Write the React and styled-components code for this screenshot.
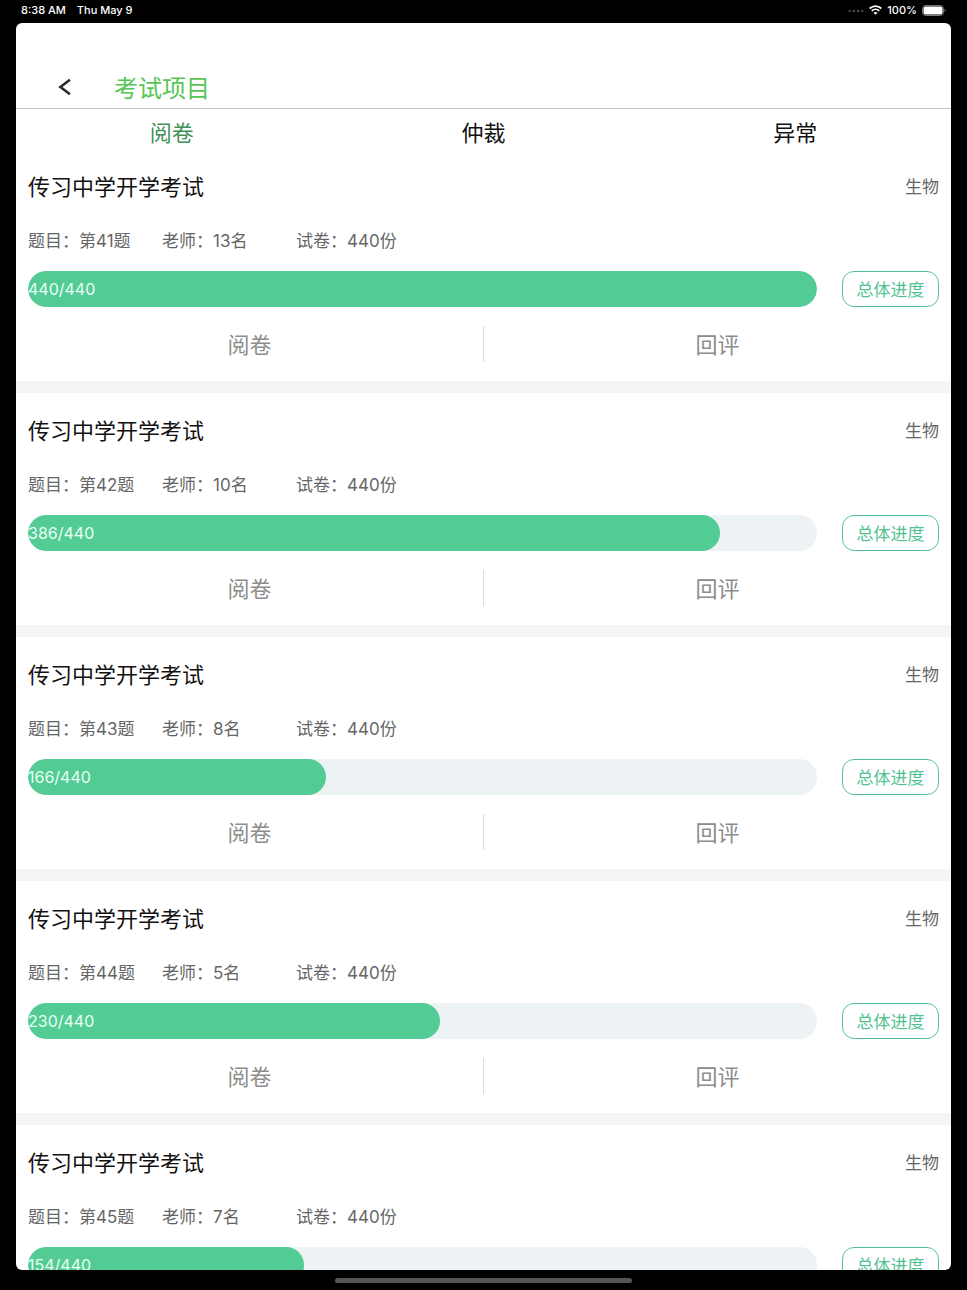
import React, { useState } from "react";
import styled, { createGlobalStyle } from "styled-components";

const exams = [
  { question: 41, teachers: 13, done: 440, total: 440 },
  { question: 42, teachers: 10, done: 386, total: 440 },
  { question: 43, teachers: 8, done: 166, total: 440 },
  { question: 44, teachers: 5, done: 230, total: 440 },
  { question: 45, teachers: 7, done: 154, total: 440 },
];

const tabs = ["阅卷", "仲裁", "异常"];

const StatusBar = () => (
  <StatusContainer>
    <StatusGroup $gap="11px">
      <span>8:38 AM</span>
      <span>Thu May 9</span>
    </StatusGroup>
    <StatusGroup $gap="5px">
      <svg width="16" height="4" viewBox="0 0 16 4" fill="#4a4a4a">
        <circle cx="1.7" cy="3" r="1.2" />
        <circle cx="5.9" cy="3" r="1.2" />
        <circle cx="10.1" cy="3" r="1.2" />
        <circle cx="14.3" cy="3" r="1.2" />
      </svg>
      <svg width="13" height="10" viewBox="0 0 13 10" fill="none" stroke="#fff">
        <path d="M0.7 3.5C4 0.3 9 0.3 12.3 3.5" strokeWidth="1.8" />
        <path d="M2.8 5.8C4.9 3.8 8.1 3.8 10.2 5.8" strokeWidth="1.8" />
        <path d="M6.5 9.8L4.5 7.7C5.6 6.7 7.4 6.7 8.5 7.7Z" fill="#fff" stroke="none" />
      </svg>
      <span>100%</span>
      <svg width="24" height="11" viewBox="0 0 24 11">
        <rect x="0.5" y="0.5" width="21" height="10" rx="3" fill="none" stroke="#777" />
        <rect x="1.5" y="1.5" width="19" height="8" rx="2" fill="#fff" />
        <path d="M22.6 3.8V7.2C24 6.6 24 4.4 22.6 3.8Z" fill="#777" />
      </svg>
    </StatusGroup>
  </StatusContainer>
);

const ExamCard = ({ exam }) => (
  <Card>
    <CardHead>
      <CardTitle>传习中学开学考试</CardTitle>
      <Subject>生物</Subject>
    </CardHead>
    <Meta>
      <span>题目：第{exam.question}题</span>
      <span>老师：{exam.teachers}名</span>
      <span>试卷：{exam.total}份</span>
    </Meta>
    <ProgressRow>
      <Track
        role="progressbar"
        aria-label="进度"
        aria-valuenow={exam.done}
        aria-valuemax={exam.total}
      >
        <Fill style={{ width: `${(exam.done / exam.total) * 100}%` }}>
          {`${exam.done}/${exam.total}`}
        </Fill>
      </Track>
      <OverallButton type="button">总体进度</OverallButton>
    </ProgressRow>
    <Actions>
      <ActionButton type="button">阅卷</ActionButton>
      <Divider />
      <ActionButton type="button">回评</ActionButton>
    </Actions>
  </Card>
);

export default function App() {
  const [active, setActive] = useState("阅卷");
  return (
    <Device>
      <GlobalStyle />
      <StatusBar />
      <Screen>
        <Header>
          <BackButton type="button" aria-label="返回">
            <svg width="14" height="18" viewBox="0 0 14 18" fill="none">
              <path d="M12 1.8L2.4 9L12 16.2" stroke="#2b2b2b" strokeWidth="2.6" />
            </svg>
          </BackButton>
          <PageTitle>考试项目</PageTitle>
        </Header>
        <TabBar>
          {tabs.map((tab) => (
            <Tab
              key={tab}
              type="button"
              $active={tab === active}
              onClick={() => setActive(tab)}
            >
              {tab}
            </Tab>
          ))}
        </TabBar>
        <List>
          {exams.map((exam) => (
            <ExamCard key={exam.question} exam={exam} />
          ))}
        </List>
      </Screen>
      <HomeArea>
        <HomeIndicator />
      </HomeArea>
    </Device>
  );
}

const GlobalStyle = createGlobalStyle`
  * {
    box-sizing: border-box;
  }
  body {
    margin: 0;
    background-color: #000;
    font-family: Inter, "Noto Sans CJK SC", sans-serif;
  }
  button {
    padding: 0;
    border: none;
    background: none;
    font-family: inherit;
    cursor: pointer;
  }
`;

const Device = styled.div`
  display: flex;
  flex-direction: column;
  height: 100vh;
  background-color: #000;
`;

const StatusContainer = styled.div`
  display: flex;
  flex-shrink: 0;
  justify-content: space-between;
  height: 23px;
  padding: 2px 21px 5px;
  color: #fff;
  font-size: 11px;
  font-weight: 500;
  line-height: 16px;
`;

const StatusGroup = styled.div`
  display: flex;
  align-items: center;
  gap: ${({ $gap }) => $gap};
`;

const Screen = styled.main`
  display: flex;
  flex: 1;
  flex-direction: column;
  min-height: 0;
  margin: 0 16px;
  overflow: hidden;
  border-radius: 6px;
  background-color: #fff;
`;

const Header = styled.header`
  display: flex;
  flex-shrink: 0;
  align-items: center;
  gap: 42px;
  height: 86px;
  padding: 46px 42px 0;
  border-bottom: 1px solid #c4c4c4;
`;

const BackButton = styled.button`
  display: flex;
  padding-bottom: 4px;
`;

const PageTitle = styled.h1`
  margin: 0;
  color: #55c555;
  font-size: 24px;
  font-weight: 400;
  line-height: 36px;
`;

const TabBar = styled.nav`
  display: grid;
  flex-shrink: 0;
  grid-template-columns: repeat(3, 1fr);
  height: 40px;
  padding-top: 8px;
`;

const Tab = styled.button`
  color: ${({ $active }) => ($active ? "#3f9157" : "#111")};
  font-size: 22px;
  line-height: 32px;
`;

const List = styled.div`
  flex: 1;
  min-height: 0;
  overflow: hidden;
`;

const Card = styled.section`
  border-bottom: 12px solid #f5f5f5;
`;

const CardHead = styled.div`
  display: flex;
  align-items: center;
  justify-content: space-between;
  height: 72px;
  padding: 0 12px;
`;

const CardTitle = styled.h2`
  margin: 0;
  color: #111;
  font-size: 22px;
  font-weight: 400;
`;

const Subject = styled.span`
  color: #666;
  font-size: 17px;
`;

const Meta = styled.div`
  display: grid;
  grid-template-columns: 134px 134px 1fr;
  align-items: center;
  height: 36px;
  margin-bottom: 14px;
  padding: 0 12px;
  color: #666;
  font-size: 17px;
`;

const ProgressRow = styled.div`
  display: flex;
  gap: 25px;
  height: 36px;
  padding: 0 12px;
`;

const Track = styled.div`
  flex: 1;
  overflow: hidden;
  border-radius: 18px;
  background-color: #edf2f5;
`;

const Fill = styled.div`
  height: 36px;
  border-radius: 18px;
  background-color: #52cb94;
  color: #e9fff4;
  font-size: 16px;
  line-height: 36px;
  white-space: nowrap;
`;

const OverallButton = styled.button`
  && {
    width: 97px;
    padding-bottom: 2px;
    border: 1px solid #52c293;
    border-radius: 12px;
    color: #52c293;
    font-size: 17px;
  }
`;

const Actions = styled.div`
  display: grid;
  grid-template-columns: 1fr 1px 1fr;
  align-items: center;
  height: 74px;
`;

const ActionButton = styled.button`
  && {
    padding-bottom: 2px;
    color: #8c8c8c;
    font-size: 22px;
  }
`;

const Divider = styled.span`
  height: 36px;
  background-color: #ddd;
`;

const HomeArea = styled.div`
  display: flex;
  flex-shrink: 0;
  align-items: center;
  justify-content: center;
  height: 20px;
`;

const HomeIndicator = styled.div`
  width: 297px;
  height: 5px;
  border-radius: 3px;
  background-color: #555;
`;
